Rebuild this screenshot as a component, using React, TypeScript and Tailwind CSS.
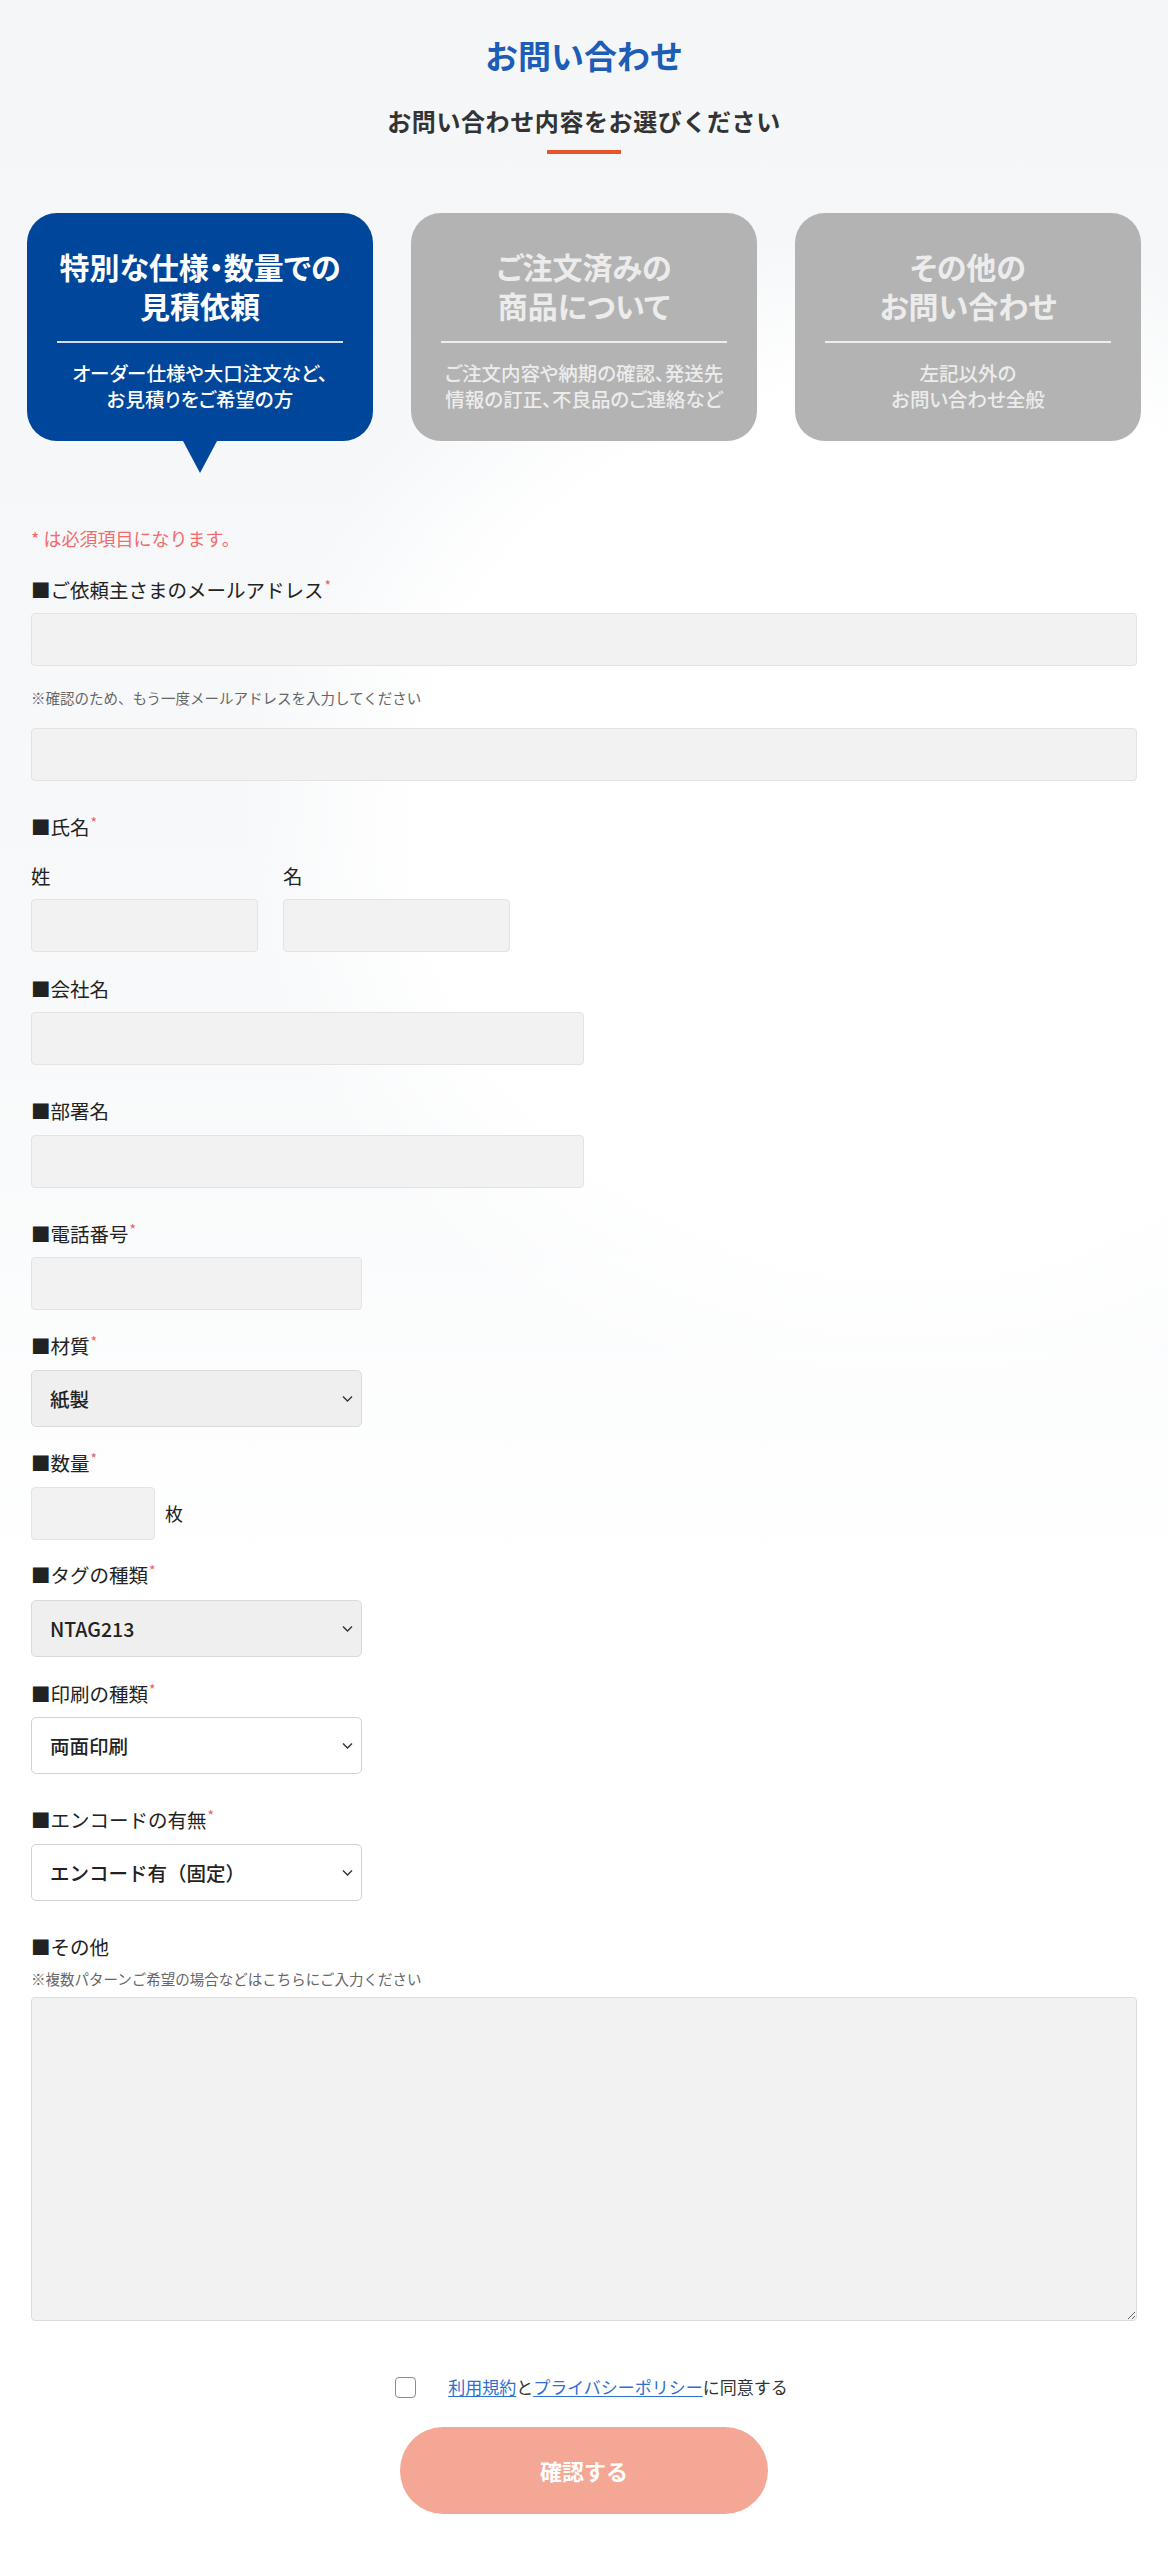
import React from 'react';

// Shared pieces for the inquiry form
const Req = () => (
    <span className="relative -top-[5px] ml-[1px] align-top text-[14px] text-[#f25b5b]">*</span>
);

const Label: React.FC<{ children: React.ReactNode; req?: boolean; className?: string }> = ({ children, req, className = '' }) => (
    <p className={`text-[19.5px] leading-[28px] text-[#222] ${className}`}>
        ■{children}
        {req && <Req />}
    </p>
);

const TextInput: React.FC<{ className?: string }> = ({ className = '' }) => (
    <input
        type="text"
        className={`block h-[53px] rounded-[4px] border border-[#e3e3e3] bg-[#f2f2f2] outline-none ${className}`}
    />
);

const Chevron = () => (
    <svg
        className="pointer-events-none absolute right-[9px] top-1/2 -translate-y-1/2"
        width="11"
        height="7"
        viewBox="0 0 11 7"
        fill="none"
    >
        <path d="M1 1l4.5 4.5L10 1" stroke="#333" strokeWidth="1.4" />
    </svg>
);

const Select: React.FC<{ value: string; filled?: boolean; className?: string }> = ({ value, filled, className = '' }) => (
    <div className={`relative w-[331px] ${className}`}>
        <select
            defaultValue={value}
            className={`block h-[57px] w-full appearance-none rounded-[5px] border pl-[18px] text-[19.5px] font-medium text-[#222] outline-none ${
                filled ? 'border-[#dadada] bg-[#efefef]' : 'border-[#d2d2d2] bg-white'
            }`}
        >
            <option>{value}</option>
        </select>
        <Chevron />
    </div>
);

const cards = [
    {
        title: ['特別な仕様・数量での', '見積依頼'],
        desc: ['オーダー仕様や大口注文など、', 'お見積りをご希望の方'],
        active: true,
    },
    {
        title: ['ご注文済みの', '商品について'],
        desc: ['ご注文内容や納期の確認、発送先', '情報の訂正、不良品のご連絡など'],
        active: false,
    },
    {
        title: ['その他の', 'お問い合わせ'],
        desc: ['左記以外の', 'お問い合わせ全般'],
        active: false,
    },
];

const App: React.FC = () => {
    return (
        <div className="min-h-[2560px] w-full bg-[radial-gradient(ellipse_900px_800px_at_78%_32%,#ffffff_0%,#ffffff_55%,rgba(255,255,255,0)_75%),linear-gradient(to_bottom,#f4f6f8_0%,#f7f9fa_40%,#ffffff_62%)] font-['Noto_Sans_CJK_JP','Noto_Sans',sans-serif] text-[#222]">
            {/* Page Header */}
            <div className="flex flex-col items-center pt-[33px]">
                <h1 className="text-[33px] font-bold leading-[44px] text-[#1d5db5]">お問い合わせ</h1>
                <p className="mt-[27px] text-[24px] font-bold leading-[34px] tracking-[0.6px] text-[#333]">
                    お問い合わせ内容をお選びください
                </p>
                <div className="mt-[12px] h-[4px] w-[74px] bg-[#e8552c]" />
            </div>

            {/* Inquiry type cards */}
            <div className="mt-[59px] grid grid-cols-3 gap-[38px] px-[27px]">
                {cards.map((card, i) => (
                    <div
                        key={i}
                        className={`relative flex h-[228px] flex-col items-center rounded-[30px] pt-[34px] text-center [font-feature-settings:'palt'] ${
                            card.active ? 'bg-[#00469b] text-white' : 'bg-[#b3b3b3] text-[#ececec]'
                        }`}
                    >
                        <p className="whitespace-nowrap text-[30px] font-bold leading-[39px]">
                            {card.title[0]}
                            <br />
                            {card.title[1]}
                        </p>
                        <div
                            className={`mt-[16px] h-[2px] w-[calc(100%-60px)] ${
                                card.active ? 'bg-[#d6deec]' : 'bg-[#eeeeee]'
                            }`}
                        />
                        <p className="mt-[17px] whitespace-nowrap text-[19.5px] font-medium leading-[26px]">
                            {card.desc[0]}
                            <br />
                            {card.desc[1]}
                        </p>
                        {card.active && (
                            <div className="absolute left-1/2 top-full h-0 w-0 -translate-x-1/2 border-l-[17px] border-r-[17px] border-t-[32px] border-l-transparent border-r-transparent border-t-[#00469b]" />
                        )}
                    </div>
                ))}
            </div>

            {/* Form */}
            <div className="mt-[84px] px-[31px]">
                <p className="text-[18px] leading-[26px] text-[#f36b6b]">* は必須項目になります。</p>

                <Label req className="mt-[25px]">ご依頼主さまのメールアドレス</Label>
                <TextInput className="mt-[9px] w-full" />
                <p className="mt-[22px] text-[14.5px] leading-[20px] text-[#666]">
                    ※確認のため、もう一度メールアドレスを入力してください
                </p>
                <TextInput className="mt-[20px] w-full" />

                <Label req className="mt-[32px]">氏名</Label>
                <div className="mt-[21px] flex gap-[25px]">
                    <div className="w-[227px]">
                        <p className="text-[19.5px] leading-[28px]">姓</p>
                        <TextInput className="mt-[9px] w-full" />
                    </div>
                    <div className="w-[227px]">
                        <p className="text-[19.5px] leading-[28px]">名</p>
                        <TextInput className="mt-[9px] w-full" />
                    </div>
                </div>

                <Label className="mt-[23px]">会社名</Label>
                <TextInput className="mt-[9px] w-[553px]" />

                <Label className="mt-[32px]">部署名</Label>
                <TextInput className="mt-[10px] w-[553px]" />

                <Label req className="mt-[32px]">電話番号</Label>
                <TextInput className="mt-[9px] w-[331px]" />

                <Label req className="mt-[22px]">材質</Label>
                <Select value="紙製" filled className="mt-[10px]" />

                <Label req className="mt-[22px]">数量</Label>
                <div className="mt-[10px] flex items-center gap-[10px]">
                    <TextInput className="w-[124px]" />
                    <span className="text-[18px]">枚</span>
                </div>

                <Label req className="mt-[21px]">タグの種類</Label>
                <Select value="NTAG213" filled className="mt-[11px]" />

                <Label req className="mt-[23px]">印刷の種類</Label>
                <Select value="両面印刷" className="mt-[9px]" />

                <Label req className="mt-[32px]">エンコードの有無</Label>
                <Select value="エンコード有（固定）" className="mt-[10px]" />

                <Label className="mt-[32px]">その他</Label>
                <p className="mt-[8px] text-[14.5px] leading-[20px] text-[#666]">
                    ※複数パターンご希望の場合などはこちらにご入力ください
                </p>
                <textarea className="mt-[8px] block h-[324px] w-full rounded-[4px] border border-[#dcdcdc] bg-[#f2f2f2] outline-none" />

                {/* Agreement */}
                <div className="mt-[51px] flex items-center justify-center pl-[15px]">
                    <input
                        type="checkbox"
                        className="h-[21px] w-[21px] appearance-none rounded-[4px] border border-[#8c8c8c] bg-white"
                    />
                    <p className="ml-[32px] text-[17px] leading-[30px] text-[#333]">
                        <a href="#" className="text-[#2d6fd2] underline underline-offset-2">利用規約</a>
                        と
                        <a href="#" className="text-[#2d6fd2] underline underline-offset-2">プライバシーポリシー</a>
                        に同意する
                    </p>
                </div>

                <div className="mt-[25px] flex justify-center">
                    <button className="h-[87px] w-[368px] rounded-full bg-[#f4a794] text-[22px] font-bold text-white">
                        確認する
                    </button>
                </div>
            </div>
        </div>
    );
};

export default App;
